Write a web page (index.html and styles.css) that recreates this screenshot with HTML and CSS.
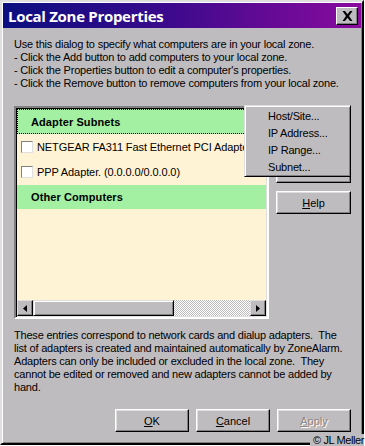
FILE: index.html
```html
<!DOCTYPE html>
<html lang="en">
<head>
  <meta charset="UTF-8">
  <meta name="viewport" content="width=device-width, initial-scale=1.0">
  <title>Local Zone Properties</title>
  <link rel="stylesheet" href="styles.css">
</head>
<body>
  <div class="window">
    <div class="titlebar">
      <span class="title">Local Zone Properties</span>
      <span class="close-btn">
        <svg width="11" height="10" viewBox="0 0 11 10"><path d="M0.5 0h2.5l2.5 3.3 2.5-3.3h2.5L7 5l3.5 5H8L5.5 6.7 3 10H0.5L4 5z" fill="#000"/></svg>
      </span>
    </div>
    <div class="content">
      <p class="intro">Use this dialog to specify what computers are in your local zone.<br>- Click the Add button to add computers to your local zone.<br>- Click the Properties button to edit a computer's properties.<br>- Click the Remove button to remove computers from your local zone.</p>
      <div class="middle">
        <div class="listbox">
          <div class="list-items">
            <div class="group focused">Adapter Subnets</div>
            <div class="item"><span class="check"></span>NETGEAR FA311 Fast Ethernet PCI Adapter</div>
            <div class="item"><span class="check"></span>PPP Adapter. (0.0.0.0/0.0.0.0)</div>
            <div class="group">Other Computers</div>
          </div>
          <div class="hscroll">
            <span class="arrow"><svg width="4" height="7" viewBox="0 0 4 7"><path d="M4 0v7L0 3.5z" fill="#000"/></svg></span>
            <span class="thumb"></span>
            <span class="track"></span>
            <span class="arrow"><svg width="4" height="7" viewBox="0 0 4 7"><path d="M0 0v7l4-3.5z" fill="#000"/></svg></span>
          </div>
        </div>
        <div class="side-buttons">
          <!-- Add / Remove / Properties sit under the open menu -->
          <button class="btn" title="Add"></button>
          <button class="btn" title="Remove"></button>
          <button class="btn" title="Properties"></button>
          <button class="btn help"><u>H</u>elp</button>
          <div class="popup-menu">
            <div class="menu-item">Host/Site...</div>
            <div class="menu-item">IP Address...</div>
            <div class="menu-item">IP Range...</div>
            <div class="menu-item">Subnet...</div>
          </div>
        </div>
      </div>
      <p class="note">These entries correspond to network cards and dialup adapters.&nbsp; The<br>list of adapters is created and maintained automatically by ZoneAlarm.<br>Adapters can only be included or excluded in the local zone.&nbsp; They<br>cannot be edited or removed and new adapters cannot be added by<br>hand.</p>
      <div class="footer">
        <button class="btn"><u>O</u>K</button>
        <button class="btn"><u>C</u>ancel</button>
        <button class="btn disabled"><u>A</u>pply</button>
      </div>
    </div>
    <span class="credit">© JL Meller</span>
  </div>
</body>
</html>
```

FILE: styles.css
```css
* {
  margin: 0;
  padding: 0;
  box-sizing: border-box;
}
body {
  font-family: 'Liberation Sans', Arial, sans-serif;
  font-size: 11px;
  color: #000;
  background: #ffffff;
  width: 365px;
  height: 446px;
  overflow: hidden;
}
.window {
  position: relative;
  width: 364px;
  height: 445px;
  background: #bfbcbf;
  border: 2px solid;
  border-color: #dfdfdf #000 #000 #dfdfdf;
  box-shadow: inset 1px 1px #fff, inset -1px -1px #808080;
  padding: 1px;
}
.titlebar {
  height: 25px;
  display: flex;
  align-items: center;
  justify-content: space-between;
  padding: 0 3px 0 5px;
  background: linear-gradient(to right, #0b0f80 0%, #3a0a8c 45%, #8a0a9e 100%);
}
.title {
  color: #ffffff;
  font-family: 'Open Sans', 'DejaVu Sans', sans-serif;
  font-weight: 700;
  font-size: 15px;
  letter-spacing: -0.3px;
}
.close-btn {
  width: 22px;
  height: 18px;
  display: flex;
  align-items: center;
  justify-content: center;
  background: #bfbcbf;
  border: 1px solid;
  border-color: #fff #000 #000 #fff;
  box-shadow: inset -1px -1px #808080;
}
.content {
  padding: 10px 10px 0 11px;
}
.intro, .note {
  line-height: 13px;
  letter-spacing: -0.2px;
  white-space: nowrap;
}
.middle {
  display: flex;
  gap: 7px;
  margin-top: 16px;
}
.listbox {
  width: 255px;
  height: 213px;
  display: flex;
  flex-direction: column;
  border: 2px solid;
  border-color: #808080 #fff #fff #808080;
  box-shadow: inset 1px 1px #000, inset -1px -1px #dfdfdf;
  padding: 1px;
  background: #fff3d6;
}
.list-items {
  flex: 1;
  overflow: hidden;
}
.group {
  height: 25px;
  display: flex;
  align-items: center;
  padding-left: 14px;
  background: #a3f0a3;
  font-weight: 700;
  letter-spacing: 0.1px;
}
.group.focused {
  outline: 1px dotted #000;
  outline-offset: -1px;
}
.item {
  height: 25px;
  display: flex;
  align-items: center;
  padding-left: 4px;
  white-space: nowrap;
  letter-spacing: -0.1px;
}
.item + .item {
  height: 26px;
}
.check {
  width: 12px;
  height: 12px;
  margin-right: 4px;
  background: #fff;
  border: 1px solid;
  border-color: #808080 #dfdfdf #dfdfdf #808080;
  flex-shrink: 0;
}
.group:last-child {
  height: 24px;
}
.hscroll {
  height: 16px;
  display: flex;
}
.arrow {
  width: 16px;
  display: flex;
  align-items: center;
  justify-content: center;
  background: #bfbcbf;
  border: 1px solid;
  border-color: #dfdfdf #000 #000 #dfdfdf;
  box-shadow: inset -1px -1px #808080;
}
.thumb {
  width: 141px;
  background: #bfbcbf;
  border: 1px solid;
  border-color: #dfdfdf #000 #000 #dfdfdf;
  box-shadow: inset 1px 1px #fff, inset -1px -1px #808080;
}
.track {
  flex: 1;
  background: repeating-conic-gradient(#ffffff 0 25%, #bfbcbf 0 50%) 0 0 / 2px 2px;
}
.side-buttons {
  position: relative;
  width: 75px;
  display: flex;
  flex-direction: column;
  gap: 4px;
}
.btn {
  height: 23px;
  width: 75px;
  font-family: inherit;
  font-size: 11px;
  color: #000;
  background: #bfbcbf;
  border: 1px solid;
  border-color: #fff #000 #000 #fff;
  box-shadow: inset -1px -1px #808080, inset 1px 1px #dfdfdf;
}
.side-buttons .help {
  margin-top: 4px;
}
.btn.disabled {
  color: #8a878a;
  text-shadow: 1px 1px #fff;
}
.popup-menu {
  position: absolute;
  top: -1px;
  right: 0;
  width: 107px;
  height: 72px;
  padding: 2px 0 0 23px;
  background: #bfbcbf;
  border: 1px solid;
  border-color: #dfdfdf #000 #000 #dfdfdf;
  box-shadow: inset 1px 1px #fff, inset -1px -1px #808080;
}
.menu-item {
  height: 17px;
  line-height: 17px;
  letter-spacing: -0.2px;
}
.note {
  margin-top: 10px;
}
.footer {
  display: flex;
  justify-content: flex-end;
  gap: 7px;
  margin-top: 15px;
}
.footer .btn {
  width: 74px;
}
.credit {
  position: absolute;
  right: -2px;
  bottom: -3px;
  padding: 0 0 0 3px;
  background: #bfbcbf;
  font-size: 11px;
  letter-spacing: -0.4px;
}
```
